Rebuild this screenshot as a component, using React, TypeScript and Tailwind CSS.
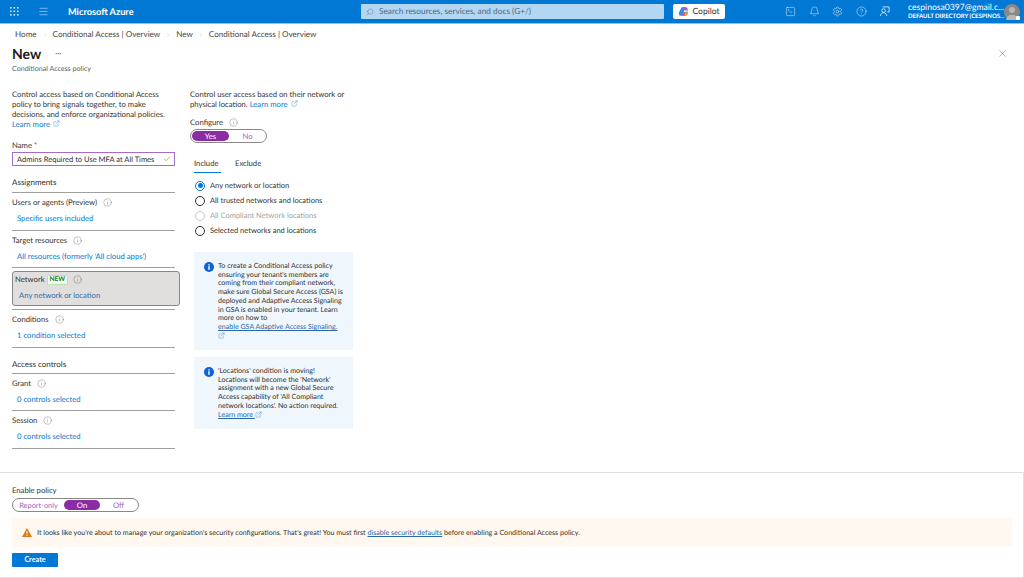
import { Bell, Check, ChevronRight, CircleHelp, ExternalLink, Info, Menu, Search, Settings, SquareTerminal, X } from "lucide-react";

const font = { fontFamily: 'Lato, sans-serif' };

const Hint = ({ className = "" }: { className?: string }) => (
  <Info size={9} strokeWidth={1} className={`shrink-0 text-[#605e5c] ${className}`} />
);

const Learn = ({ label = "Learn more" }: { label?: string }) => (
  <a className="text-[#0078d4]">
    {label} <ExternalLink size={7} strokeWidth={1.2} className="ml-[1px] inline align-baseline" />
  </a>
);

const Waffle = () => (
  <svg width="9" height="9" viewBox="0 0 9 9" fill="#cfe4f6">
    {[0, 3.5, 7].flatMap((y) =>
      [0, 3.5, 7].map((x) => <rect key={`${x}-${y}`} x={x} y={y} width="1.6" height="1.6" />),
    )}
  </svg>
);

const CopilotMark = () => (
  <svg width="11" height="11" viewBox="0 0 12 12">
    <path d="M1 7 3.5 2.2C4 1.2 5 1 6 1h2L5 10.5H3C1.4 10.5.5 8.6 1 7Z" fill="#2f8fe8" />
    <path d="M5 1h3c1.2 0 2 .8 2.3 1.8L11 5H7.5L6 3.5Z" fill="#a55bd8" />
    <path d="M5 11h3c1.4 0 2.2-1 2.6-2.2L11 6.5H8L7 8.5Z" fill="#f0a030" />
    <path d="M4 11 6 6.5h2L7 11Z" fill="#e8578a" />
    <path d="M8 6h3l-.6 2.6L8 8Z" fill="#7cc34a" />
  </svg>
);

const Avatar = () => (
  <div className="relative flex h-4 w-4 shrink-0 items-end justify-center rounded-full bg-[#8a8886]">
    <div className="absolute top-[3px] h-[6px] w-[6px] rounded-full bg-[#b8b6b4]" />
    <div className="h-[5px] w-[12px] rounded-t-full bg-[#b8b6b4]" />
    <div className="absolute right-0 bottom-0 h-[4px] w-[4px] rounded-[1px] bg-white" />
  </div>
);

const TopBar = () => (
  <header className="flex h-[24px] shrink-0 items-center border-b border-[#8cc4ee] bg-[#0078d4] text-white">
    <div className="ml-[10px] flex w-[28px]">
      <Waffle />
    </div>
    <Menu size={11} strokeWidth={1.2} className="text-[#dcecf9]" />
    <span className="ml-[19px] w-[293px] text-[9.2px] font-bold">Microsoft Azure</span>
    <div className="flex h-[15px] w-[303px] items-center gap-[5px] rounded-[1px] bg-[#b3d6f2] pl-[5px] text-[8.3px] text-[#4a6a88]">
      <Search size={8} strokeWidth={1.2} className="-scale-x-100" />
      <span>Search resources, services, and docs (G+/)</span>
    </div>
    <div className="ml-[9px] flex h-[15px] w-[52px] items-center justify-center gap-[3px] rounded-[2px] bg-white text-[8.5px] text-[#323130]">
      <CopilotMark />
      Copilot
    </div>
    <div className="ml-[60px] flex w-[123px] items-center gap-[12.5px] text-white">
      <SquareTerminal size={11} strokeWidth={1} />
      <Bell size={11} strokeWidth={1} />
      <Settings size={11} strokeWidth={1} />
      <CircleHelp size={11} strokeWidth={1} />
      <svg width="11" height="11" viewBox="0 0 12 12" fill="none" stroke="currentColor" strokeWidth="0.8">
        <circle cx="5" cy="5" r="2" />
        <path d="M1.5 11c.3-2.4 1.6-3.6 3.5-3.6S8 8.4 8.5 11M4 1h7v5.5H9" />
      </svg>
    </div>
    <div className="w-[96px] leading-none">
      <div className="whitespace-nowrap text-[8.6px]">cespinosa0397@gmail.c...</div>
      <div className="mt-[2px] whitespace-nowrap text-[6px] font-bold">DEFAULT DIRECTORY (CESPINOS...</div>
    </div>
    <Avatar />
  </header>
);

const Divider = () => <div className="h-px w-full bg-[#a19f9d]" />;

const Row = ({ label, link }: { label: string; link: string }) => (
  <>
    <div className="flex h-[36.5px] flex-col">
      <div className="mt-[4px] flex h-[11px] items-center gap-[6px] text-[#323130]">
        {label}
        <Hint />
      </div>
      <div className="mt-[5px] pl-[5px] text-[#0078d4]">{link}</div>
    </div>
    <Divider />
  </>
);

const Radio = ({ label, checked, disabled }: { label: string; checked?: boolean; disabled?: boolean }) => (
  <div className={`flex h-[15px] items-center gap-[5px] text-[7.5px] ${disabled ? "text-[#a19f9d]" : "text-[#323130]"}`}>
    <span
      className={`flex h-[10px] w-[10px] items-center justify-center rounded-full border ${
        disabled ? "border-[#c8c6c4]" : checked ? "border-[#0078d4]" : "border-[#323130]"
      }`}
    >
      {checked && <span className="h-[5px] w-[5px] rounded-full bg-[#0078d4]" />}
    </span>
    {label}
  </div>
);

const InfoBox = ({ children, className }: { children: React.ReactNode; className: string }) => (
  <div className={`flex gap-[4px] bg-[#eff6fc] pl-[10px] ${className}`}>
    <svg width="10" height="10" viewBox="0 0 10 10" className="mt-[10px] shrink-0">
      <circle cx="5" cy="5" r="5" fill="#0f62d6" />
      <rect x="4.3" y="4.2" width="1.4" height="3.6" fill="#fff" />
      <rect x="4.3" y="2.2" width="1.4" height="1.3" fill="#fff" />
    </svg>
    <div className="mt-[10px] w-[132px] text-[7.1px] leading-[8.7px] whitespace-nowrap text-[#323130]">{children}</div>
  </div>
);

const LeftColumn = () => (
  <section className="w-[163px] shrink-0">
    <p className="h-[41px] leading-[10px] whitespace-nowrap text-[#323130]">
      Control access based on Conditional Access
      <br />
      policy to bring signals together, to make
      <br />
      decisions, and enforce organizational policies.
      <br />
      <Learn />
    </p>
    <div className="mt-[10px] text-[#323130]">
      Name <span className="text-[#a4262c]">*</span>
    </div>
    <div className="mt-[1px] flex h-[14px] items-center justify-between border border-[#a56cc1] pr-[3px] pl-[4px] text-[7.55px] text-[#323130]">
      <span className="whitespace-nowrap">Admins Required to Use MFA at All Times</span>
      <Check size={8} strokeWidth={1.8} className="text-[#57a300]" />
    </div>
    <div className="mt-[10px] flex h-[15px] items-center pb-[2px] text-[8px] text-[#323130]">Assignments</div>
    <div className="mt-[1px]">
      <Divider />
    </div>
    <Row label="Users or agents (Preview)" link="Specific users included" />
    <Row label="Target resources" link="All resources (formerly 'All cloud apps')" />
    <div className="mt-[3px] -mb-[1px] flex h-[35px] w-[168px] flex-col rounded-[3px] border border-[#8a8886] bg-[#e1dfdd] pl-[2px]">
      <div className="mt-[2px] flex h-[11px] items-center gap-[5px] text-[#323130]">
        Network
        <span className="-ml-[3px] border border-[#bfe0b5] bg-[#f1faf1] px-[2px] text-[6.5px] leading-[8px] font-bold text-[#107c10]">
          NEW
        </span>
        <Hint />
      </div>
      <div className="mt-[5px] pl-[4px] text-[#2b6aa8]">Any network or location</div>
    </div>
    <div className="mt-[4px]">
      <Divider />
    </div>
    <Row label="Conditions" link="1 condition selected" />
    <div className="mt-[10px] flex h-[15px] items-center pb-[2px] text-[8px] text-[#323130]">Access controls</div>
    <Divider />
    <Row label="Grant" link="0 controls selected" />
    <Row label="Session" link="0 controls selected" />
  </section>
);

const RightColumn = () => (
  <section className="ml-[15px] w-[165px] shrink-0">
    <p className="leading-[10px] whitespace-nowrap text-[#323130]">
      Control user access based on their network or
      <br />
      physical location. <Learn />
    </p>
    <div className="mt-[8px] flex h-[11px] items-center gap-[6px] text-[#323130]">
      Configure
      <Hint />
    </div>
    <div className="mt-[1px] flex h-[14px] w-[77px] items-center rounded-full border border-[#8a8886] pl-[1px]">
      <span className="h-[10px] w-[37px] rounded-full bg-[#8a2da5] text-center leading-[10px] text-white">Yes</span>
      <span className="w-[37px] text-center text-[#a45cc0]">No</span>
    </div>
    <div className="mt-[15px] ml-[4px] flex gap-[14px] text-[#323130]">
      <span className="h-[15px] w-[27px] border-b border-[#0078d4] whitespace-nowrap">Include</span>
      <span>Exclude</span>
    </div>
    <div className="mt-[5px] ml-[5px] flex flex-col whitespace-nowrap">
      <Radio label="Any network or location" checked />
      <Radio label="All trusted networks and locations" />
      <Radio label="All Compliant Network locations" disabled />
      <Radio label="Selected networks and locations" />
    </div>
    <div className="ml-[4px]">
      <InfoBox className="mt-[14px] h-[98px] w-[159px]">
        To create a Conditional Access policy
        <br />
        ensuring your tenant's members are
        <br />
        coming from their compliant network,
        <br />
        make sure Global Secure Access (GSA) is
        <br />
        deployed and Adaptive Access Signaling
        <br />
        in GSA is enabled in your tenant. Learn
        <br />
        more on how to
        <br />
        <a className="text-[#2b6aa8] underline">enable GSA Adaptive Access Signaling.</a>
        <br />
        <ExternalLink size={7} strokeWidth={1.2} className="inline text-[#2b6aa8]" />
      </InfoBox>
      <InfoBox className="mt-[7px] h-[72px] w-[159px]">
        'Locations' condition is moving!
        <br />
        Locations will become the 'Network'
        <br />
        assignment with a new Global Secure
        <br />
        Access capability of 'All Compliant
        <br />
        network locations'. No action required.
        <br />
        <a className="text-[#2b6aa8] underline">Learn more </a>
        <ExternalLink size={7} strokeWidth={1.2} className="inline text-[#2b6aa8]" />
      </InfoBox>
    </div>
  </section>
);

const Footer = () => (
  <footer className="mt-auto flex h-[106px] shrink-0 flex-col border-t border-r border-b border-[#e1dfdd] pt-[12px] pl-[12px]">
    <div className="text-[#323130]">Enable policy</div>
    <div className="mt-[2px] flex h-[14px] w-[127px] items-center rounded-full border border-[#8a8886] text-[#a45cc0]">
      <span className="w-[50px] pl-[1px] text-center text-[7.4px]">Report-only</span>
      <span className="ml-[1px] h-[10px] w-[36px] rounded-full bg-[#8a2da5] text-center leading-[10px] text-white">On</span>
      <span className="w-[37px] text-center">Off</span>
    </div>
    <div className="mt-[6px] flex h-[29px] w-[1000px] items-center gap-[5px] bg-[#fff8f0] pl-[10px] text-[7.1px] text-[#323130]">
      <svg width="10" height="9" viewBox="0 0 10 9">
        <path d="M5 0 10 9H0Z" fill="#d9791c" />
        <rect x="4.5" y="3" width="1" height="3.2" fill="#fff" />
        <rect x="4.5" y="6.8" width="1" height="1" fill="#fff" />
      </svg>
      <span>
        It looks like you're about to manage your organization's security configurations. That's great! You must first{" "}
        <a className="text-[#2b6aa8] underline">disable security defaults</a> before enabling a Conditional Access policy.
      </span>
    </div>
    <button className="mt-[6px] h-[14px] w-[46px] rounded-[1px] bg-[#0078d4] text-[7.2px] leading-[14px] font-bold text-white">
      Create
    </button>
  </footer>
);

export default function App() {
  return (
    <div
      className="flex h-[578px] w-[1024px] flex-col overflow-hidden bg-white text-[7.7px] leading-[11px] [text-rendering:geometricPrecision]"
      style={font}
    >
      <TopBar />
      <div className="flex h-[21px] shrink-0 items-center gap-[5px] pl-[15px] text-[8.1px] text-[#484644]">
        <span>Home</span>
        <ChevronRight size={6} strokeWidth={1} className="text-[#a19f9d]" />
        <span>Conditional Access | Overview</span>
        <ChevronRight size={6} strokeWidth={1} className="text-[#a19f9d]" />
        <span>New</span>
        <ChevronRight size={6} strokeWidth={1} className="text-[#a19f9d]" />
        <span>Conditional Access | Overview</span>
      </div>
      <div className="flex h-[17px] shrink-0 items-center pr-[16px] pl-[12px]">
        <h1 className="-mt-[1px] text-[14px] leading-[17px] font-bold text-[#1b1a19]">New</h1>
        <span className="ml-[14px] text-[8px] text-[#605e5c]">···</span>
        <X size={11} strokeWidth={1} className="ml-auto text-[#605e5c]" />
      </div>
      <div className="mt-[1px] h-[26px] shrink-0 pl-[12px] text-[7.1px] text-[#605e5c]">Conditional Access policy</div>
      <main className="flex pl-[12px]">
        <LeftColumn />
        <RightColumn />
      </main>
      <Footer />
    </div>
  );
}
